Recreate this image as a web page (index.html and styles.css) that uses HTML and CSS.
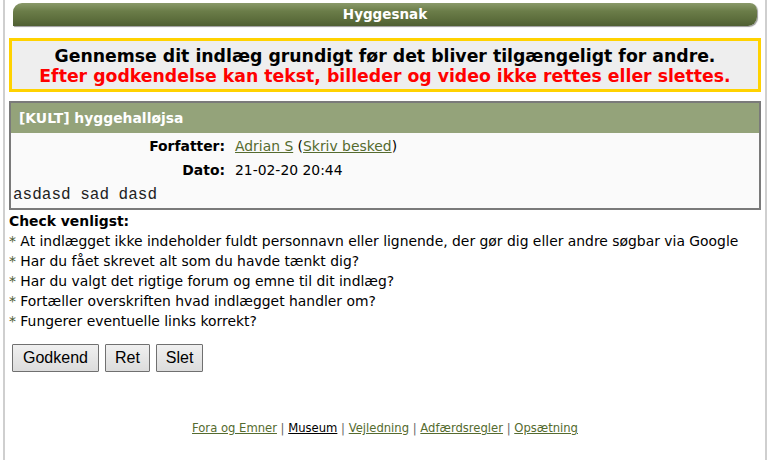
FILE: index.html
```html
<!DOCTYPE html>
<html>
<head>
<meta charset="utf-8">
<link rel="stylesheet" href="styles.css">
</head>
<body>
<div class="page">
  <div class="titlebar">Hyggesnak</div>
  <div class="warning">
    <div class="warn-black">Gennemse dit indlæg grundigt før det bliver tilgængeligt for andre.</div>
    <div class="warn-red">Efter godkendelse kan tekst, billeder og video ikke rettes eller slettes.</div>
  </div>
  <div class="post">
    <div class="post-head">[KULT] hyggehalløjsa</div>
    <div class="post-body">
      <div class="meta">
        <div class="meta-label">Forfatter:</div>
        <div class="meta-value"><a href="#" class="lnk">Adrian S</a> (<a href="#" class="lnk">Skriv besked</a>)</div>
        <div class="meta-label">Dato:</div>
        <div class="meta-value">21-02-20 20:44</div>
      </div>
      <div class="post-text">asdasd sad dasd</div>
    </div>
  </div>
  <div class="check">
    <div class="check-title">Check venligst:</div>
    <div class="check-item"><span class="ast">*</span> At indlægget ikke indeholder fuldt personnavn eller lignende, der gør dig eller andre søgbar via Google</div>
    <div class="check-item"><span class="ast">*</span> Har du fået skrevet alt som du havde tænkt dig?</div>
    <div class="check-item"><span class="ast">*</span> Har du valgt det rigtige forum og emne til dit indlæg?</div>
    <div class="check-item"><span class="ast">*</span> Fortæller overskriften hvad indlægget handler om?</div>
    <div class="check-item"><span class="ast">*</span> Fungerer eventuelle links korrekt?</div>
  </div>
  <div class="buttons">
    <button class="btn btn-wide">Godkend</button>
    <button class="btn">Ret</button>
    <button class="btn">Slet</button>
  </div>
  <div class="footer">
    <a href="#" class="flink">Fora og Emner</a> | <a href="#" class="flink cur">Museum</a> | <a href="#" class="flink">Vejledning</a> | <a href="#" class="flink">Adfærdsregler</a> | <a href="#" class="flink">Opsætning</a>
  </div>
</div>
</body>
</html>
```
FILE: styles.css
```css
html, body {
  margin: 0;
  padding: 0;
  background: #fff;
}
body {
  font-family: "DejaVu Sans", Verdana, sans-serif;
  color: #000;
}
.page {
  margin-left: 3px;
  width: 764px;
  border-left: 2px solid #cfcfcf;
  border-right: 2px solid #cfcfcf;
  min-height: 460px;
  box-sizing: border-box;
  padding: 3px 4px 0 4px;
}
.titlebar {
  margin: 0 4px 0 4px;
  height: 23px;
  line-height: 23px;
  text-align: center;
  color: #fff;
  font-weight: bold;
  font-size: 13.5px;
  border-radius: 9px 7px 9px 0;
  background: linear-gradient(#8a9a6a 0%, #6b7d49 35%, #5b6c3b 75%, #4f5f32 100%);
  box-shadow: 1px 1px 1px #999;
}
.warning {
  margin-top: 12px;
  border: 3px solid #ffd200;
  background: #eeeeee;
  text-align: center;
  font-weight: bold;
  font-size: 17.3px;
  line-height: 20px;
  padding: 5px 0 3px;
}
.warn-red {
  color: #ff0000;
}
.post {
  margin-top: 9px;
  border: 2px solid #7a7a7a;
}
.post-head {
  background: #94a37a;
  color: #fff;
  font-weight: bold;
  font-size: 13.9px;
  height: 30px;
  line-height: 30px;
  padding-left: 8px;
}
.post-body {
  background: #fafafa;
  padding: 1px 0 0;
}
.meta {
  display: grid;
  grid-template-columns: 214px 1fr;
  column-gap: 10px;
  row-gap: 0;
  font-size: 13.9px;
  line-height: 24px;
}
.meta-label {
  text-align: right;
  font-weight: bold;
}
.lnk {
  color: #556b2f;
  text-decoration: underline;
}
.post-text {
  font-family: "Liberation Mono", "Courier New", monospace;
  font-size: 16px;
  line-height: 26px;
  padding-left: 2px;
  color: #222;
}
.check {
  font-size: 13.9px;
  line-height: 20px;
  margin-top: 1px;
}
.check-title {
  font-weight: bold;
}
.ast {
  color: #4a5a30;
}
.buttons {
  display: flex;
  gap: 6px;
  margin-top: 13px;
  padding-left: 3px;
}
.btn {
  font-family: "Liberation Sans", Arial, sans-serif;
  font-size: 16px;
  height: 28px;
  padding: 0 9px;
  background: linear-gradient(#f0f0f0, #dcdcdc);
  border: 1px solid #707070;
  border-radius: 1px;
  color: #000;
}
.btn-wide {
  padding: 0 10px;
}
.footer {
  margin-top: 49px;
  text-align: center;
  font-size: 11.6px;
  color: #666;
}
.flink {
  color: #556b2f;
  text-decoration: underline;
}
.flink.cur {
  color: #000;
}
```
